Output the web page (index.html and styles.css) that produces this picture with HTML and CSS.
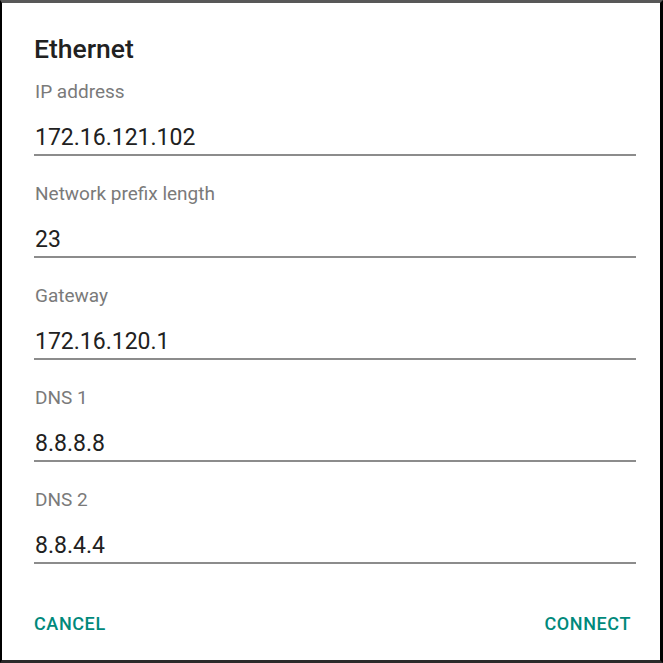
FILE: index.html
```html
<!DOCTYPE html>
<html>
<head>
<meta charset="utf-8">
<link rel="stylesheet" href="styles.css">
</head>
<body>
<div class="dialog">
  <h1 class="title">Ethernet</h1>
  <div class="fields">
    <div class="field">
      <div class="label">IP address</div>
      <div class="value">172.16.121.102</div>
    </div>
    <div class="field">
      <div class="label">Network prefix length</div>
      <div class="value">23</div>
    </div>
    <div class="field">
      <div class="label">Gateway</div>
      <div class="value">172.16.120.1</div>
    </div>
    <div class="field">
      <div class="label">DNS 1</div>
      <div class="value">8.8.8.8</div>
    </div>
    <div class="field">
      <div class="label">DNS 2</div>
      <div class="value">8.8.4.4</div>
    </div>
  </div>
  <div class="actions">
    <span class="btn">CANCEL</span>
    <span class="btn">CONNECT</span>
  </div>
</div>
</body>
</html>
```
FILE: styles.css
```css
html, body {
  margin: 0;
  padding: 0;
  background: #000;
}
.dialog {
  box-sizing: border-box;
  width: 663px;
  height: 663px;
  background: #fff;
  border-top: 3px solid #585858;
  border-left: 2px solid #000;
  border-right: 3px solid #000;
  border-bottom: 3px solid #2a2a2a;
  padding: 31px 24px 0 32px;
  font-family: Roboto, "Noto Sans", sans-serif;
  display: flex;
  flex-direction: column;
}
.title {
  margin: 0 0 16px 0;
  font-size: 26.5px;
  line-height: 30px;
  font-weight: 500;
  color: #212121;
}
.fields {
  display: flex;
  flex-direction: column;
  gap: 26px;
}
.field {
  display: flex;
  flex-direction: column;
}
.label {
  font-size: 19px;
  line-height: 24px;
  color: #7a7a7a;
  margin-bottom: 19px;
  padding-left: 1px;
}
.value {
  font-size: 23px;
  line-height: 30px;
  color: #212121;
  padding-bottom: 1px;
  border-bottom: 2px solid #8c8c8c;
  padding-left: 1px;
}
.actions {
  margin-top: 50px;
  display: flex;
  justify-content: space-between;
  padding-right: 5px;
}
.btn {
  font-size: 18px;
  line-height: 20px;
  font-weight: 500;
  color: #00897b;
  letter-spacing: 0.6px;
}
```
